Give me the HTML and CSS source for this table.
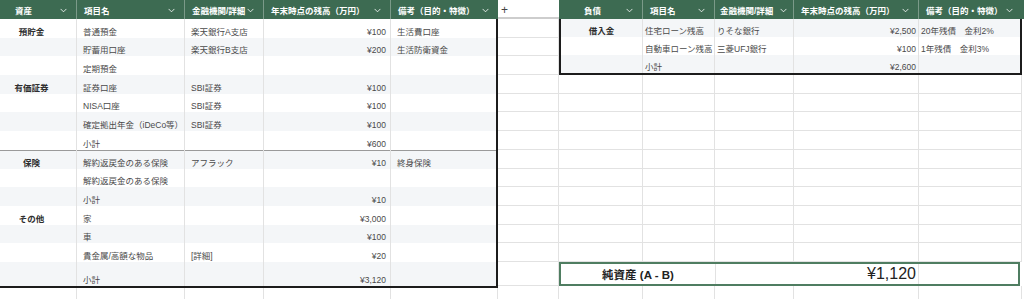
FILE: index.html
```html
<!DOCTYPE html>
<html lang="ja">
<head>
<meta charset="utf-8">
<title>資産・負債</title>
<link rel="stylesheet" href="styles.css">
</head>
<body>
<div class="sheet">
  <section class="assets">
    <div class="hdr ahdr">
      <div class="hcell first"><span class="hl">資産</span><svg class="chev" viewBox="0 0 8 5"><path d="M1 1l3 3 3-3"/></svg></div>
      <div class="hcell"><span>項目名</span><svg class="chev" viewBox="0 0 8 5"><path d="M1 1l3 3 3-3"/></svg></div>
      <div class="hcell"><span>金融機関/詳細</span><svg class="chev" viewBox="0 0 8 5"><path d="M1 1l3 3 3-3"/></svg></div>
      <div class="hcell"><span>年末時点の残高（万円）</span><svg class="chev" viewBox="0 0 8 5"><path d="M1 1l3 3 3-3"/></svg></div>
      <div class="hcell"><span>備考（目的・特徴）</span><svg class="chev" viewBox="0 0 8 5"><path d="M1 1l3 3 3-3"/></svg></div>
    </div>
    <div class="abody">
      <div class="row"><div class="c lbl">預貯金</div><div class="c">普通預金</div><div class="c">楽天銀行A支店</div><div class="c num">¥100</div><div class="c">生活費口座</div></div>
      <div class="row"><div class="c lbl"></div><div class="c">貯蓄用口座</div><div class="c">楽天銀行B支店</div><div class="c num">¥200</div><div class="c">生活防衛資金</div></div>
      <div class="row"><div class="c lbl"></div><div class="c">定期預金</div><div class="c"></div><div class="c num"></div><div class="c"></div></div>
      <div class="row"><div class="c lbl">有価証券</div><div class="c">証券口座</div><div class="c">SBI証券</div><div class="c num">¥100</div><div class="c"></div></div>
      <div class="row"><div class="c lbl"></div><div class="c">NISA口座</div><div class="c">SBI証券</div><div class="c num">¥100</div><div class="c"></div></div>
      <div class="row"><div class="c lbl"></div><div class="c">確定拠出年金（iDeCo等）</div><div class="c">SBI証券</div><div class="c num">¥100</div><div class="c"></div></div>
      <div class="row"><div class="c lbl"></div><div class="c">小計</div><div class="c"></div><div class="c num">¥600</div><div class="c"></div></div>
      <div class="row sec"><div class="c lbl">保険</div><div class="c">解約返戻金のある保険</div><div class="c">アフラック</div><div class="c num">¥10</div><div class="c">終身保険</div></div>
      <div class="row"><div class="c lbl"></div><div class="c">解約返戻金のある保険</div><div class="c"></div><div class="c num"></div><div class="c"></div></div>
      <div class="row"><div class="c lbl"></div><div class="c">小計</div><div class="c"></div><div class="c num">¥10</div><div class="c"></div></div>
      <div class="row"><div class="c lbl">その他</div><div class="c">家</div><div class="c"></div><div class="c num">¥3,000</div><div class="c"></div></div>
      <div class="row"><div class="c lbl"></div><div class="c">車</div><div class="c"></div><div class="c num">¥100</div><div class="c"></div></div>
      <div class="row"><div class="c lbl"></div><div class="c">貴金属/高額な物品</div><div class="c">[詳細]</div><div class="c num">¥20</div><div class="c"></div></div>
      <div class="row tall"><div class="c lbl"></div><div class="c">小計</div><div class="c"></div><div class="c num">¥3,120</div><div class="c"></div></div>
    </div>
    <div class="erow aerow"><div></div><div></div><div></div><div></div><div></div></div>
  </section>

  <section class="gap">
    <div class="ghdr">+</div>
    <div class="gcell"></div><div class="gcell"></div><div class="gcell"></div><div class="gcell"></div>
    <div class="gcell"></div><div class="gcell"></div><div class="gcell"></div><div class="gcell"></div>
    <div class="gcell"></div><div class="gcell"></div><div class="gcell"></div><div class="gcell"></div>
    <div class="gcell"></div><div class="gcell tall"></div><div class="gcell"></div>
  </section>

  <section class="liab">
    <div class="hdr lhdr">
      <div class="hcell centered"><span class="hl">負債</span><svg class="chev" viewBox="0 0 8 5"><path d="M1 1l3 3 3-3"/></svg></div>
      <div class="hcell"><span>項目名</span><svg class="chev" viewBox="0 0 8 5"><path d="M1 1l3 3 3-3"/></svg></div>
      <div class="hcell tight"><span>金融機関/詳細</span><svg class="chev" viewBox="0 0 8 5"><path d="M1 1l3 3 3-3"/></svg></div>
      <div class="hcell"><span>年末時点の残高（万円）</span><svg class="chev" viewBox="0 0 8 5"><path d="M1 1l3 3 3-3"/></svg></div>
      <div class="hcell"><span>備考（目的・特徴）</span><svg class="chev" viewBox="0 0 8 5"><path d="M1 1l3 3 3-3"/></svg></div>
    </div>
    <div class="lbox">
      <div class="row lrow"><div class="c lbl lb2">借入金</div><div class="c t">住宅ローン残高</div><div class="c t">りそな銀行</div><div class="c num t">¥2,500</div><div class="c t">20年残債　金利2%</div></div>
      <div class="row lrow"><div class="c lbl lb2"></div><div class="c t">自動車ローン残高</div><div class="c t">三菱UFJ銀行</div><div class="c num t">¥100</div><div class="c t">1年残債　金利3%</div></div>
      <div class="row lrow"><div class="c lbl lb2"></div><div class="c t">小計</div><div class="c t"></div><div class="c num t">¥2,600</div><div class="c t"></div></div>
    </div>
    <div class="erow lerow"><div></div><div></div><div></div><div></div><div></div></div>
    <div class="erow lerow"><div></div><div></div><div></div><div></div><div></div></div>
    <div class="erow lerow"><div></div><div></div><div></div><div></div><div></div></div>
    <div class="erow lerow"><div></div><div></div><div></div><div></div><div></div></div>
    <div class="erow lerow"><div></div><div></div><div></div><div></div><div></div></div>
    <div class="erow lerow"><div></div><div></div><div></div><div></div><div></div></div>
    <div class="erow lerow"><div></div><div></div><div></div><div></div><div></div></div>
    <div class="erow lerow"><div></div><div></div><div></div><div></div><div></div></div>
    <div class="erow lerow"><div></div><div></div><div></div><div></div><div></div></div>
    <div class="erow lerow"><div></div><div></div><div></div><div></div><div></div></div>
    <div class="net">
      <div class="nlabel">純資産 (A - B)</div>
      <div class="nvalue">¥1,120</div>
      <div class="nblank"></div>
    </div>
    <div class="erow lerow"><div></div><div></div><div></div><div></div><div></div></div>
  </section>
</div>
</body>
</html>
```
FILE: styles.css
```css
:root {
  --rh: 18.7px;
  --line: #e2e2e2;
  --band: #f4f6f8;
  --green: #3d6b52;
  --ngreen: #4f7d61;
  --ink: #1c1c1c;
}

* { box-sizing: border-box; }

body {
  margin: 0;
  background: #fff;
  color: #4a4a4a;
  font-family: "Liberation Sans", "Noto Sans CJK JP", sans-serif;
  font-size: 8.5px;
  overflow: hidden;
}

.sheet {
  display: flex;
  width: 1024px;
  height: 299px;
  overflow: hidden;
}

/* ---------- header ---------- */
.hdr {
  display: grid;
  height: 19px;
  background: var(--green);
  color: #fff;
  font-weight: 700;
}
.ahdr { grid-template-columns: 77px 108px 79px 127px 107px; }
.lhdr { grid-template-columns: 84px 72px 79px 125px 103px; }

.hcell {
  display: flex;
  align-items: center;
  justify-content: space-between;
  padding: 2px 9px 0 7px;
  border-right: 1px solid rgba(255, 255, 255, 0.32);
  white-space: nowrap;
  overflow: hidden;
  line-height: 10px;
}
.hcell:last-child { border-right: none; }
.hcell.tight { padding-left: 5px; padding-right: 6px; }
.hcell.first { padding-left: 0; }
.hcell.first .hl { flex: 1; text-align: center; margin-right: 13px; }
.hcell.centered { padding-left: 0; }
.hcell.centered .hl { flex: 1; text-align: center; }

.chev {
  width: 7px;
  height: 5px;
  flex: none;
  fill: none;
  stroke: rgba(255, 255, 255, 0.85);
  stroke-width: 1.1;
  stroke-linecap: round;
  stroke-linejoin: round;
}

/* ---------- assets table ---------- */
.assets { width: 498px; flex: none; }

.abody {
  border-right: 2px solid var(--ink);
  border-bottom: 2px solid var(--ink);
}

.row {
  display: grid;
  height: var(--rh);
  grid-template-columns: 77px 108px 79px 127px 105px;
}
.abody .row:nth-child(even) { background: var(--band); }
.row.tall { height: 24px; }
.row.sec { box-shadow: inset 0 1px 0 #9a9a9a; }

.c {
  display: flex;
  align-items: flex-end;
  padding: 0 6px 1px;
  border-right: 1px solid var(--line);
  white-space: nowrap;
  overflow: hidden;
  line-height: 10px;
}
.row .c:last-child { border-right: none; }
.c.lbl {
  justify-content: center;
  padding-left: 0;
  padding-right: 13px;
  font-weight: 700;
  color: #2e2e2e;
}
.c.num { justify-content: flex-end; padding-right: 4px; }

.erow { display: grid; height: var(--rh); }
.erow > div {
  border-right: 1px solid var(--line);
  border-bottom: 1px solid var(--line);
}
.aerow { grid-template-columns: 77px 108px 79px 127px 107px; }

/* ---------- gap column ---------- */
.gap { width: 61px; flex: none; }
.ghdr {
  height: 19px;
  border-bottom: 2px solid #cdcdcd;
  padding: 4px 0 0 3px;
  font-size: 12px;
  line-height: 12px;
  color: #444;
}
.gcell {
  height: var(--rh);
  border-right: 1px solid var(--line);
  border-bottom: 1px solid var(--line);
}
.gcell.tall { height: 24px; }

/* ---------- liabilities ---------- */
.liab { width: 465px; flex: none; }

.lbox {
  width: 463px;
  height: calc(var(--rh) * 3);
  display: flex;
  flex-direction: column;
  border: 2px solid var(--ink);
  border-top: none;
}
.lrow {
  flex: 1;
  height: auto;
  grid-template-columns: 82px 72px 79px 125px 101px;
}
.lbox .lrow:nth-child(odd) { background: var(--band); }
.c.t { padding-left: 2px; padding-right: 2px; }
.c.lb2 { padding-right: 0; }

.lerow { grid-template-columns: 84px 72px 79px 125px 103px; }

.net {
  display: grid;
  grid-template-columns: 154px 204px 99px;
  width: 461px;
  height: 24px;
  border: 2px solid var(--ngreen);
}
.nlabel {
  display: flex;
  align-items: flex-end;
  justify-content: center;
  padding-bottom: 2px;
  font-size: 11.5px;
  line-height: 14px;
  font-weight: 700;
  color: #222;
  white-space: nowrap;
}
.nvalue {
  display: flex;
  align-items: center;
  justify-content: flex-end;
  padding-right: 2px;
  font-size: 16px;
  color: #222;
  border-left: 1px solid var(--line);
  border-right: 1px solid var(--line);
}
```
